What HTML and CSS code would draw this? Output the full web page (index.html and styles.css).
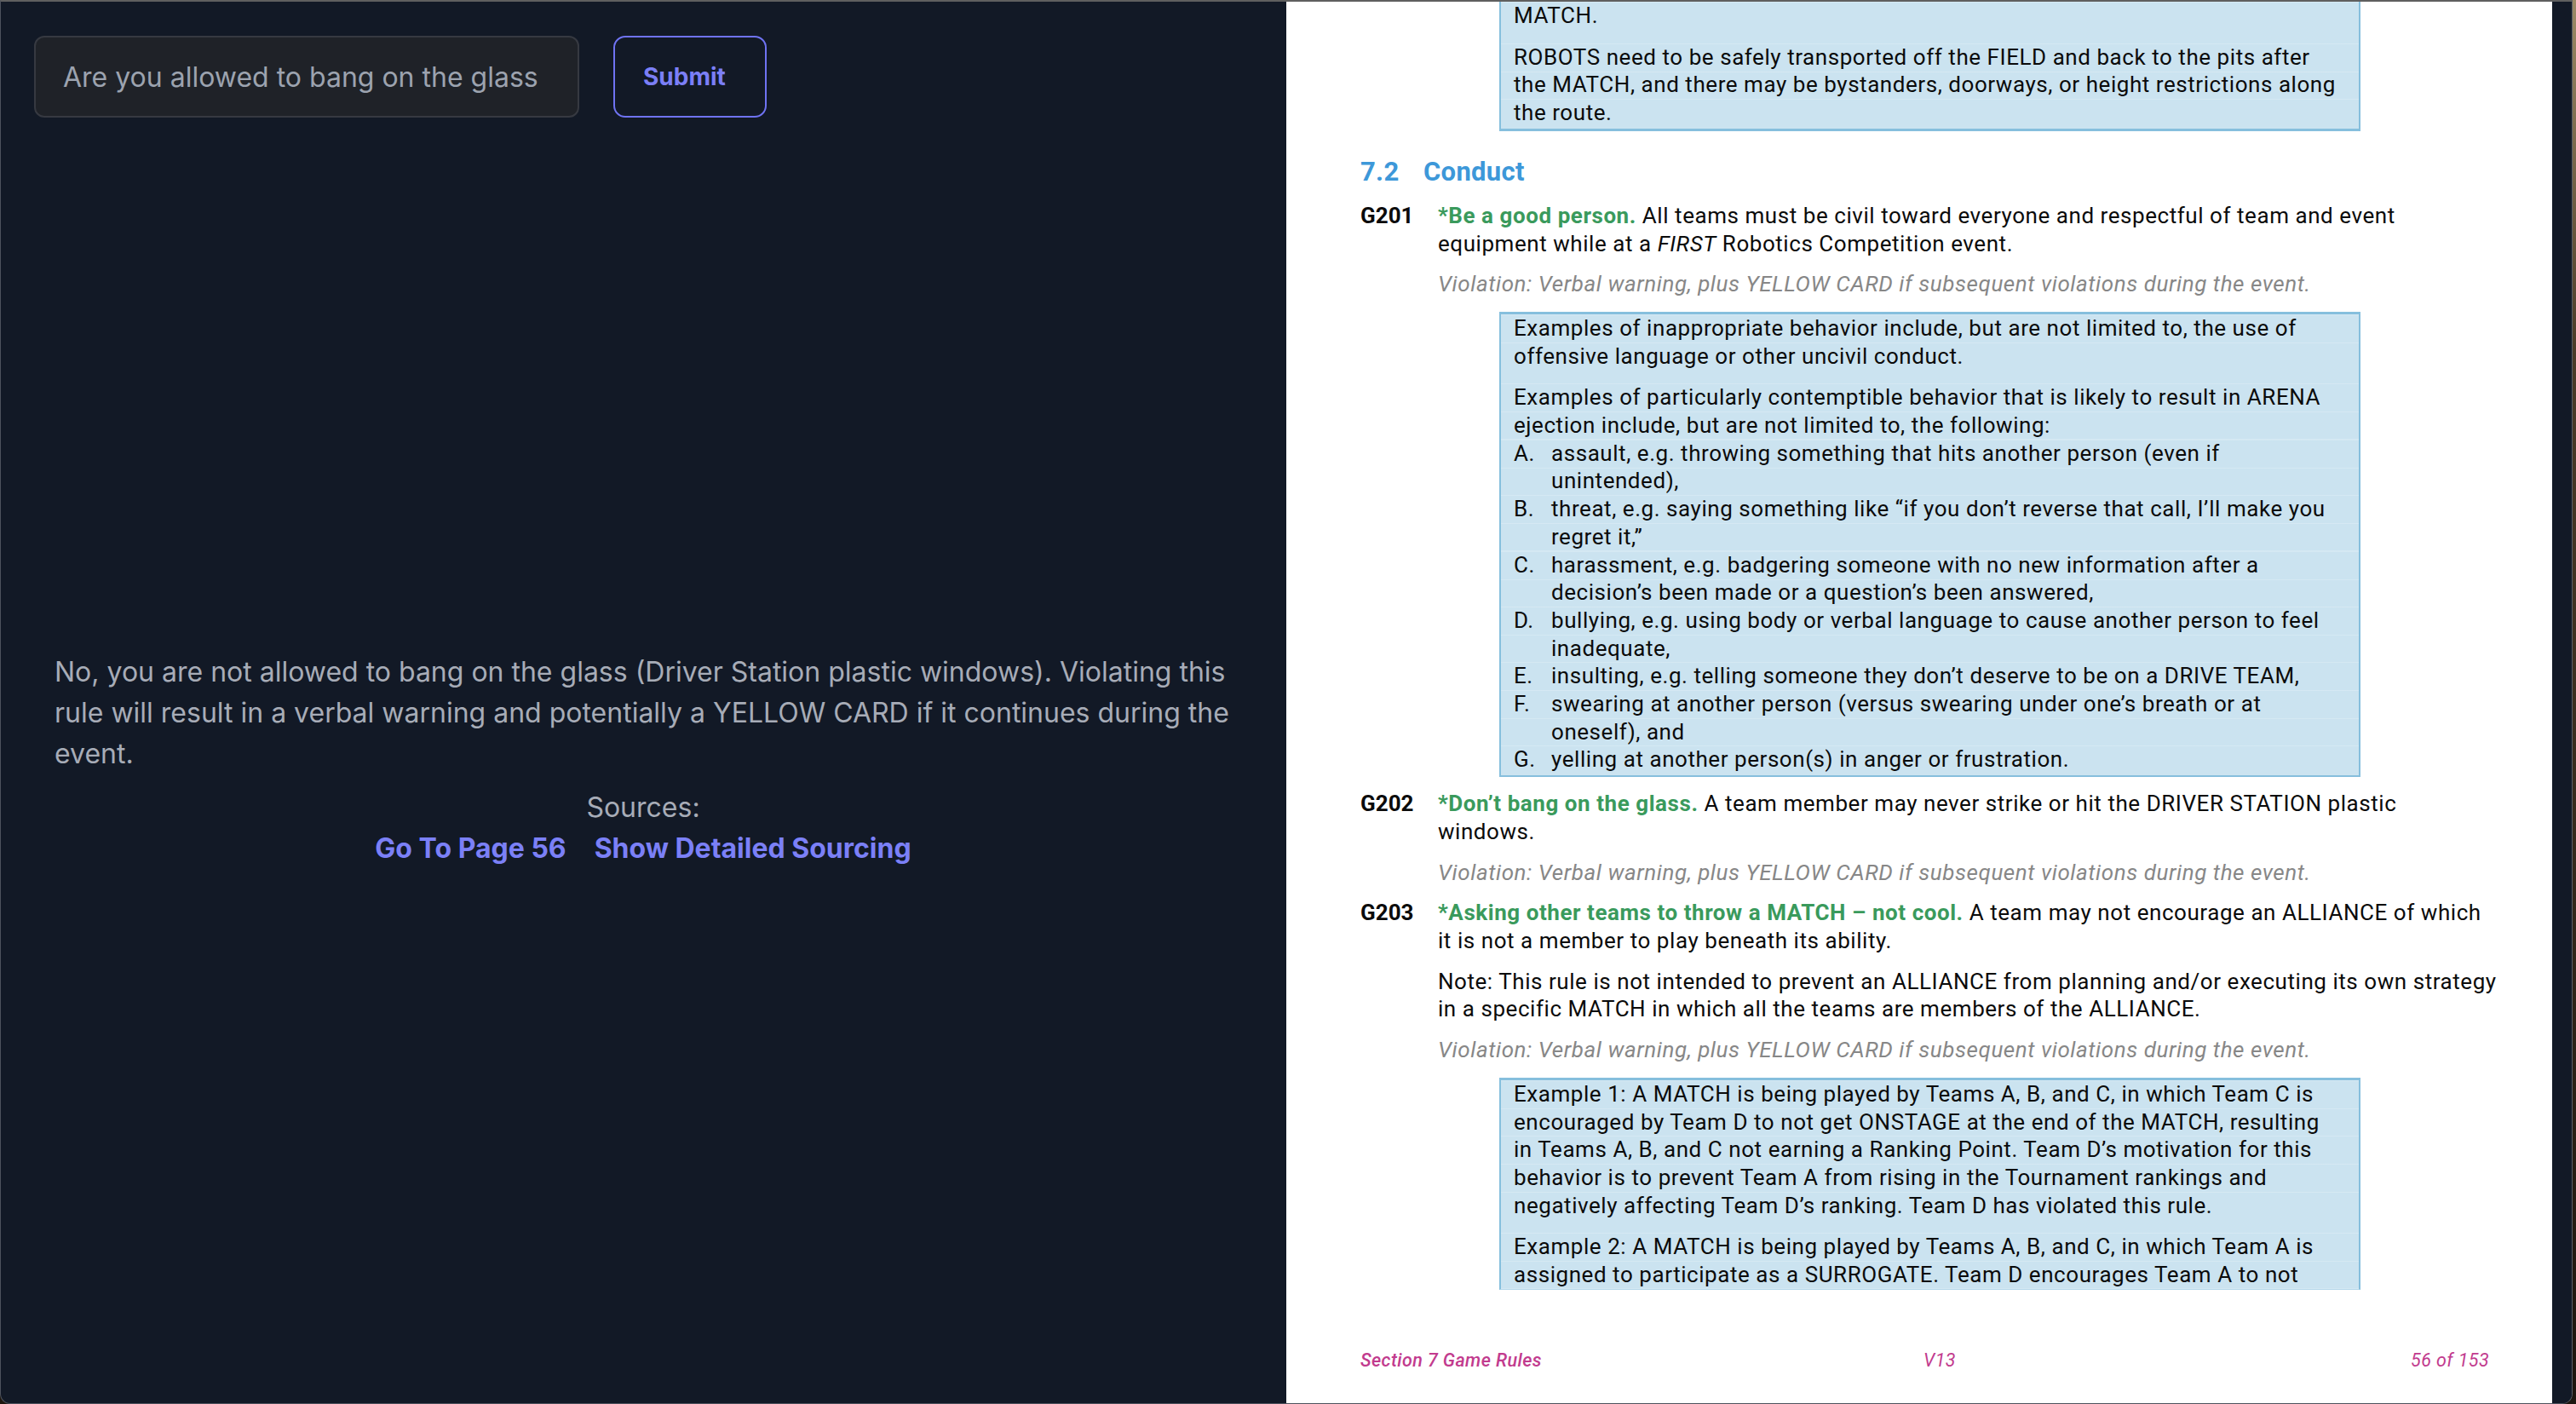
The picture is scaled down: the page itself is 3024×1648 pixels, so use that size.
FILE: index.html
```html
<!DOCTYPE html>
<html lang="en">
<head>
<meta charset="utf-8">
<title>Game Manual Q&amp;A</title>
<link rel="stylesheet" href="styles.css">
</head>
<body>
<div class="window">
  <main class="chat">
    <form class="ask">
      <input class="ask-input" type="text" value="Are you allowed to bang on the glass">
      <button class="ask-btn" type="button">Submit</button>
    </form>
    <section class="answer">
      <div class="answer-inner">
        <p class="answer-text">No, you are not allowed to bang on the glass (Driver Station plastic windows). Violating this rule will result in a verbal warning and potentially a YELLOW CARD if it continues during the event.</p>
        <div class="sources">
          <div class="sources-label">Sources:</div>
          <div class="sources-links"><a class="src-link" href="#">Go To Page 56</a><a class="src-link" href="#">Show Detailed Sourcing</a></div>
        </div>
      </div>
    </section>
  </main>
  <aside class="viewer">
    <div class="page">
      <div class="page-body">
        <div class="cont">
          <div class="callout callout-cut">
            <p>MATCH.</p>
            <p>ROBOTS need to be safely transported off the FIELD and back to the pits after<br>the MATCH, and there may be bystanders, doorways, or height restrictions along<br>the route.</p>
          </div>
        </div>

        <h2 class="section"><span class="sec-num">7.2</span>Conduct</h2>

        <div class="rule">
          <div class="rule-id">G201</div>
          <div class="rule-body">
            <p><b class="rule-title">*Be a good person.</b> All teams must be civil toward everyone and respectful of team and event<br>equipment while at a <i>FIRST</i> Robotics Competition event.</p>
            <p class="violation">Violation: Verbal warning, plus YELLOW CARD if subsequent violations during the event.</p>
            <div class="callout">
              <p>Examples of inappropriate behavior include, but are not limited to, the use of<br>offensive language or other uncivil conduct.</p>
              <div class="para">
                <p>Examples of particularly contemptible behavior that is likely to result in ARENA<br>ejection include, but are not limited to, the following:</p>
                <div class="item"><span>A.</span><span>assault, e.g. throwing something that hits another person (even if<br>unintended),</span></div>
                <div class="item"><span>B.</span><span>threat, e.g. saying something like “if you don’t reverse that call, I’ll make you<br>regret it,”</span></div>
                <div class="item"><span>C.</span><span>harassment, e.g. badgering someone with no new information after a<br>decision’s been made or a question’s been answered,</span></div>
                <div class="item"><span>D.</span><span>bullying, e.g. using body or verbal language to cause another person to feel<br>inadequate,</span></div>
                <div class="item"><span>E.</span><span>insulting, e.g. telling someone they don’t deserve to be on a DRIVE TEAM,</span></div>
                <div class="item"><span>F.</span><span>swearing at another person (versus swearing under one’s breath or at<br>oneself), and</span></div>
                <div class="item"><span>G.</span><span>yelling at another person(s) in anger or frustration.</span></div>
              </div>
            </div>
          </div>
        </div>

        <div class="rule">
          <div class="rule-id">G202</div>
          <div class="rule-body">
            <p><b class="rule-title">*Don’t bang on the glass.</b> A team member may never strike or hit the DRIVER STATION plastic<br>windows.</p>
            <p class="violation">Violation: Verbal warning, plus YELLOW CARD if subsequent violations during the event.</p>
          </div>
        </div>

        <div class="rule">
          <div class="rule-id">G203</div>
          <div class="rule-body">
            <p><b class="rule-title">*Asking other teams to throw a MATCH – not cool.</b> A team may not encourage an ALLIANCE of which<br>it is not a member to play beneath its ability.</p>
            <p>Note: This rule is not intended to prevent an ALLIANCE from planning and/or executing its own strategy<br>in a specific MATCH in which all the teams are members of the ALLIANCE.</p>
            <p class="violation">Violation: Verbal warning, plus YELLOW CARD if subsequent violations during the event.</p>
            <div class="callout callout-open">
              <p>Example 1: A MATCH is being played by Teams A, B, and C, in which Team C is<br>encouraged by Team D to not get ONSTAGE at the end of the MATCH, resulting<br>in Teams A, B, and C not earning a Ranking Point. Team D’s motivation for this<br>behavior is to prevent Team A from rising in the Tournament rankings and<br>negatively affecting Team D’s ranking. Team D has violated this rule.</p>
              <p>Example 2: A MATCH is being played by Teams A, B, and C, in which Team A is<br>assigned to participate as a SURROGATE. Team D encourages Team A to not</p>
            </div>
          </div>
        </div>
      </div>

      <footer class="page-foot">
        <span class="foot-sec">Section 7 Game Rules</span>
        <span class="foot-ver">V13</span>
        <span class="foot-num">56 of 153</span>
      </footer>
    </div>
  </aside>
</div>
</body>
</html>
```

FILE: styles.css
```css
* {
  box-sizing: border-box;
}

html,
body {
  margin: 0;
  height: 100%;
}

p {
  margin: 0;
}

body {
  background: linear-gradient(180deg, #9c8a66 0%, #4a3b29 25%, #1d160f 100%);
  overflow: hidden;
}

.window {
  width: 3020px;
  height: 1648px;
  display: flex;
  background: #121926;
  border-top: 2px solid #5f5f5f;
  border-left: 1px solid #4d525c;
  border-right: 1px solid #5b5f68;
  border-bottom: 1px solid #4d525c;
  border-radius: 0 0 12px 12px;
  overflow: hidden;
}

/* ---------- left: question / answer ---------- */

.chat {
  width: 1509px;
  flex: none;
  display: flex;
  flex-direction: column;
  font-family: Inter, "Liberation Sans", sans-serif;
}

.ask {
  display: flex;
  gap: 40px;
  padding: 40px 0 0 39px;
  margin: 0;
}

.ask-input {
  width: 640px;
  height: 96px;
  background: #1f2228;
  border: 2px solid #363941;
  border-radius: 12px;
  padding: 0 32px;
  font-family: Inter, "Liberation Sans", sans-serif;
  font-size: 32px;
  color: #9ca3af;
  outline: none;
}

.ask-btn {
  width: 180px;
  height: 96px;
  background: transparent;
  border: 2px solid #6f73f2;
  border-radius: 14px;
  padding: 0 0 0 33px;
  text-align: left;
  font-family: Inter, "Liberation Sans", sans-serif;
  font-size: 28px;
  font-weight: 700;
  color: #7b7ff7;
}

.answer {
  flex: 1;
  display: flex;
  align-items: center;
  padding: 0 64px 0 63px;
}

.answer-inner {
  width: 100%;
}

.answer-text {
  font-size: 32px;
  line-height: 48px;
  color: #a7acb7;
}

.sources {
  margin-top: 15px;
  text-align: center;
  font-size: 32px;
  line-height: 48px;
}

.sources-label {
  color: #a7acb7;
}

.sources-links {
  display: flex;
  justify-content: center;
  gap: 33px;
}

.src-link {
  color: #7b80f7;
  font-weight: 700;
  text-decoration: none;
}

/* ---------- right: pdf viewer ---------- */

.viewer {
  flex: 1;
  display: flex;
  padding-right: 23px;
  background: #121926;
}

.page {
  flex: 1;
  background: #ffffff;
  display: flex;
  flex-direction: column;
  padding-left: 87px;
  font-family: Roboto, "Liberation Sans", sans-serif;
  font-size: 26px;
  letter-spacing: 0.55px;
  line-height: 32.7px;
  color: #0b0b0b;
  white-space: nowrap;
}

.cont {
  padding-left: 163px;
}

.callout {
  width: 1011px;
  background: #cbe3f0;
  border: 2px solid #86bfdd;
  border-top-width: 3px;
  padding: 0 0 2px 15px;
}

.callout > * + * {
  margin-top: 16px;
}

.callout p,
.callout .item {
  background-image: repeating-linear-gradient(180deg, rgba(255, 255, 255, 0.2) 0, rgba(255, 255, 255, 0.2) 1px, transparent 1px, transparent 32.7px);
  margin-left: -15px;
  padding-left: 15px;
}

.callout-cut {
  border-top: 0;
  border-bottom-width: 3px;
}

.callout-open {
  border-bottom: 1px solid #b5d7ea;
  padding-bottom: 0;
}

.item {
  display: grid;
  grid-template-columns: 44px 1fr;
}

.section {
  margin: 28px 0 0;
  font-size: 31px;
  line-height: 40px;
  letter-spacing: 0.3px;
  font-weight: 700;
  color: #3d98d9;
}

.sec-num {
  display: inline-block;
  width: 74px;
}

.rule {
  display: grid;
  grid-template-columns: 91px 1fr;
  margin-top: 15px;
}

.rule-id {
  font-weight: 700;
  letter-spacing: 0;
}

.rule-body > * + * {
  margin-top: 15px;
}

.rule-body > .callout {
  margin-left: 72px;
  margin-top: 16px;
}

.rule-title {
  color: #3a9a5c;
  font-weight: 700;
}

.violation {
  font-style: italic;
  color: #878787;
}

.page-foot {
  margin-top: auto;
  margin-bottom: 36px;
  padding-right: 74px;
  display: grid;
  grid-template-columns: 661px 1fr auto;
  font-size: 21.5px;
  letter-spacing: 0.4px;
  line-height: 28px;
  font-style: italic;
  color: #c23b8e;
}

.foot-sec {
  font-weight: 500;
}
```
